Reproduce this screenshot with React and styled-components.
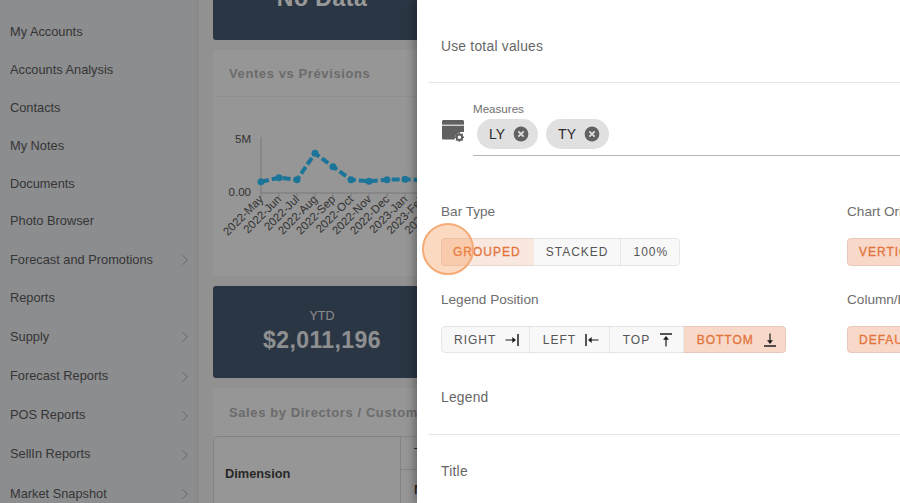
import React from "react";
import styled, { createGlobalStyle } from "styled-components";
import { ChevronRight } from "lucide-react";

const menu = [
  { label: "My Accounts" },
  { label: "Accounts Analysis" },
  { label: "Contacts" },
  { label: "My Notes" },
  { label: "Documents" },
  { label: "Photo Browser" },
  { label: "Forecast and Promotions", more: true },
  { label: "Reports" },
  { label: "Supply", more: true },
  { label: "Forecast Reports", more: true },
  { label: "POS Reports", more: true },
  { label: "SellIn Reports", more: true },
  { label: "Market Snapshot", more: true },
];

const months = [
  "2022-May", "2022-Jun", "2022-Jul", "2022-Aug", "2022-Sep", "2022-Oct",
  "2022-Nov", "2022-Dec", "2023-Jan", "2023-Feb", "2023-Mar",
];
const values = [85.7, 81.7, 83.7, 57.3, 70.7, 83.7, 85.3, 83.7, 83.3, 84, 84];

const App = () => (
  <>
    <GlobalStyle />
    <Page>
      <Sidebar>
        {menu.map(item => (
          <MenuItem key={item.label} $more={item.more}>
            {item.label}
            {item.more && <ChevronRight size={18} strokeWidth={1.2} />}
          </MenuItem>
        ))}
      </Sidebar>
      <Main>
        <StatCard $height={40}>
          <NoData>No Data</NoData>
        </StatCard>
        <Card $height={226}>
          <CardHeader>Ventes vs Prévisions</CardHeader>
          <Chart />
        </Card>
        <StatCard $height={92} $centered>
          <StatLabel>YTD</StatLabel>
          <StatValue>$2,011,196</StatValue>
        </StatCard>
        <Card>
          <CardHeader $plain>Sales by Directors / Customers</CardHeader>
          <Table>
            <DimensionCell>Dimension</DimensionCell>
            <TableCell>T</TableCell>
            <TableCell $last>N</TableCell>
          </Table>
        </Card>
      </Main>
      <Scrim />
      <Drawer>
        <ToggleRow>Use total values</ToggleRow>
        <Divider />
        <MeasuresRow>
          <WindowGearIcon />
          <MeasuresField>
            <FieldLabel>Measures</FieldLabel>
            <ChipRow>
              <Chip>LY<ChipClose /></Chip>
              <Chip>TY<ChipClose /></Chip>
            </ChipRow>
          </MeasuresField>
        </MeasuresRow>
        <OptionsGrid>
          <Option>
            <OptionLabel>Bar Type</OptionLabel>
            <ButtonGroup>
              <SegButton $state="fading">GROUPED</SegButton>
              <SegButton>STACKED</SegButton>
              <SegButton>100%</SegButton>
            </ButtonGroup>
          </Option>
          <Option>
            <OptionLabel>Chart Orientation</OptionLabel>
            <ButtonGroup>
              <SegButton $state="active">VERTICAL</SegButton>
              <SegButton>HORIZONTAL</SegButton>
            </ButtonGroup>
          </Option>
          <Option>
            <OptionLabel>Legend Position</OptionLabel>
            <ButtonGroup $short>
              <SegButton $icon>RIGHT<ArrowToIcon $turn={0} /></SegButton>
              <SegButton $icon>LEFT<ArrowToIcon $turn={180} /></SegButton>
              <SegButton $icon>TOP<ArrowToIcon $turn={270} /></SegButton>
              <SegButton $icon $state="active">BOTTOM<ArrowToIcon $turn={90} /></SegButton>
            </ButtonGroup>
          </Option>
          <Option>
            <OptionLabel>Column/Bar Width</OptionLabel>
            <ButtonGroup $short>
              <SegButton $state="active">DEFAULT</SegButton>
              <SegButton>CUSTOM</SegButton>
            </ButtonGroup>
          </Option>
        </OptionsGrid>
        <ToggleRow $legend>Legend</ToggleRow>
        <Divider />
        <ToggleRow $title>Title</ToggleRow>
      </Drawer>
      <ClickMarker />
    </Page>
  </>
);

const Chart = () => (
  <ChartSvg viewBox="0 0 204 180" width="204" height="180">
    <path d="M48 41V97H204" fill="none" stroke="#c9c9c9" />
    {months.map((m, i) => (
      <g key={m}>
        <path d={`M${48 + i * 18} 97v4`} stroke="#c9c9c9" />
        <AxisLabel transform={`translate(${51 + i * 18} 104) rotate(-45)`} textAnchor="end">
          {m}
        </AxisLabel>
      </g>
    ))}
    <AxisLabel x="38" y="47" textAnchor="end">5M</AxisLabel>
    <AxisLabel x="38" y="100" textAnchor="end">0.00</AxisLabel>
    <polyline
      points={values.map((v, i) => `${48 + i * 18},${v}`).join(" ")}
      fill="none"
      stroke="#30c4ff"
      strokeWidth="4"
      strokeDasharray="8 3"
    />
    {values.map((v, i) => (
      <circle key={months[i]} cx={48 + i * 18} cy={v} r="3.5" fill="#30c4ff" />
    ))}
  </ChartSvg>
);

const WindowGearIcon = () => (
  <IconSlot viewBox="0 0 24 24" width="24" height="24">
    <path
      d="M2.6 1H21.4C22.3 1 23 1.7 23 2.6V13H19.5L15 15.5 13.5 20.5H2.6C1.7 20.5 1 19.8 1 18.9V2.6C1 1.7 1.7 1 2.6 1Z"
      fill="#616161"
    />
    <path d="M1 6.2H23" stroke="#fff" strokeWidth="1" />
    <circle cx="18.4" cy="18.2" r="2.7" fill="none" stroke="#616161" strokeWidth="2" />
    <path
      d="M18.4 13.6v1.6M18.4 21.2v1.6M13.8 18.2h1.6M21.4 18.2h1.6M15.1 14.9l1.1 1.1M20.6 20.4l1.1 1.1M15.1 21.5l1.1-1.1M20.6 16l1.1-1.1"
      stroke="#616161"
      strokeWidth="1.6"
    />
  </IconSlot>
);

const ChipClose = () => (
  <ChipIcon viewBox="0 0 16 16" width="16" height="16">
    <circle cx="8" cy="8" r="7.4" fill="#616161" />
    <path d="M5.3 5.3l5.4 5.4M10.7 5.3l-5.4 5.4" stroke="#e0e0e0" strokeWidth="1.7" />
  </ChipIcon>
);

const ArrowToIcon = ({ $turn }) => (
  <ArrowSvg viewBox="0 0 14 14" width="14" height="14" $turn={$turn}>
    <path d="M0.5 7H10" stroke="#1c1c1c" strokeWidth="1.2" />
    <path d="M7.6 4.6L10.6 7 7.6 9.4Z" fill="#1c1c1c" stroke="#1c1c1c" strokeWidth="0.6" />
    <path d="M13 1V13" stroke="#1c1c1c" strokeWidth="1.5" />
  </ArrowSvg>
);

const GlobalStyle = createGlobalStyle`
  html, body {
    margin: 0;
    height: 100%;
    overflow: hidden;
    font-family: "Liberation Sans", Arial, sans-serif;
  }
`;

const Page = styled.div`
  position: relative;
  display: flex;
  width: 900px;
  height: 503px;
  overflow: hidden;
  background: #f2f2f2;
`;

const Sidebar = styled.nav`
  flex: 0 0 198px;
  box-sizing: border-box;
  padding-top: 13px;
  background: #e9ebee;
  border-right: 1px solid #dcdcdc;
`;

const MenuItem = styled.div`
  display: flex;
  align-items: center;
  justify-content: space-between;
  box-sizing: border-box;
  height: ${p => (p.$more ? "39.2px" : "37.8px")};
  padding: 0 3px 0 10px;
  font-size: 12.8px;
  color: #5a5a5a;
  white-space: nowrap;

  svg {
    color: #a5a5a5;
    margin-top: 2px;
  }
`;

const Main = styled.main`
  flex: 0 0 620px;
  display: flex;
  flex-direction: column;
  gap: 10px;
  padding-left: 15px;
`;

const StatCard = styled.div`
  box-sizing: border-box;
  flex: 0 0 auto;
  display: flex;
  flex-direction: column;
  align-items: center;
  justify-content: ${p => (p.$centered ? "center" : "flex-end")};
  width: 218px;
  height: ${p => p.$height}px;
  overflow: hidden;
  background: #475a70;
  border-radius: 0 0 3px 3px;
  color: #fff;
  ${p => p.$centered && "border-radius: 3px;"}
`;

const NoData = styled.div`
  font-size: 23px;
  font-weight: bold;
  letter-spacing: 0.5px;
  line-height: 28px;
  margin-bottom: 28px;
`;

const StatLabel = styled.div`
  font-size: 12.5px;
  line-height: 16px;
  opacity: 0.85;
`;

const StatValue = styled.div`
  font-size: 23px;
  font-weight: bold;
  line-height: 32px;
  letter-spacing: 0.4px;
  opacity: 0.9;
`;

const Card = styled.section`
  flex: ${p => (p.$height ? "0 0 auto" : "1 0 auto")};
  height: ${p => (p.$height ? `${p.$height}px` : "auto")};
  background: #fafafa;
  border-radius: 3px;
`;

const CardHeader = styled.h3`
  box-sizing: border-box;
  height: ${p => (p.$plain ? "48px" : "47px")};
  margin: 0;
  padding: ${p => (p.$plain ? "16.5px" : "15.5px")} 16px 0;
  font-size: 13px;
  line-height: 16px;
  letter-spacing: 0.6px;
  font-weight: bold;
  color: #b3b3b3;
  white-space: nowrap;
  border-bottom: ${p => (p.$plain ? "none" : "1px solid #f0f0f0")};
`;

const ChartSvg = styled.svg`
  display: block;
  margin-top: -1px;
`;

const AxisLabel = styled.text`
  font-size: 11.5px;
  fill: #555;
  font-family: "Liberation Sans", Arial, sans-serif;
`;

const Table = styled.div`
  display: grid;
  grid-template-columns: 187px 1fr;
  grid-template-rows: 33px 40px;
  box-sizing: border-box;
  border: 1px solid #dcdcdc;
  border-radius: 4px;
`;

const DimensionCell = styled.div`
  grid-row: 1 / 3;
  display: flex;
  align-items: center;
  padding-left: 11px;
  font-size: 12.8px;
  font-weight: bold;
  color: #444;
  border-right: 1px solid #dcdcdc;
`;

const TableCell = styled.div`
  padding: ${p => (p.$last ? "12px" : "8px")} 13px 0;
  font-size: 13px;
  font-weight: ${p => (p.$last ? "bold" : "normal")};
  color: #444;
  border-bottom: ${p => (p.$last ? "none" : "1px solid #dcdcdc")};
`;

const Scrim = styled.div`
  position: absolute;
  inset: 0;
  background: rgba(0, 0, 0, 0.4);
`;

const Drawer = styled.aside`
  position: absolute;
  top: 0;
  bottom: 0;
  left: 417px;
  width: 620px;
  box-sizing: border-box;
  padding-left: 12px;
  background: #fff;
  box-shadow: -3px 0 8px rgba(0, 0, 0, 0.3);
`;

const ToggleRow = styled.div`
  box-sizing: border-box;
  height: ${p => (p.$title ? "68px" : p.$legend ? "81px" : "82px")};
  padding: ${p => (p.$title ? "27.5px" : p.$legend ? "36px" : "37.5px")} 0 0 12px;
  font-size: 13.8px;
  letter-spacing: 0.25px;
  line-height: 17px;
  color: #666;
`;

const Divider = styled.hr`
  height: 1px;
  margin: 0;
  border: none;
  background: #e4e4e4;
`;

const MeasuresRow = styled.div`
  display: flex;
  align-items: flex-start;
  padding: 19px 0 0 12px;
`;

const IconSlot = styled.svg`
  flex: none;
  margin: 17px 8px 0 0;
`;

const MeasuresField = styled.div`
  flex: 1;
  border-bottom: 1px solid #b5b5b5;
`;

const FieldLabel = styled.div`
  font-size: 11.6px;
  line-height: 14px;
  color: #707070;
`;

const ChipRow = styled.div`
  display: flex;
  gap: 8px;
  padding: 3px 0 6px 4px;
`;

const Chip = styled.div`
  display: flex;
  align-items: center;
  justify-content: space-between;
  box-sizing: border-box;
  height: 30px;
  gap: 8px;
  padding: 0 9px 0 12px;
  border-radius: 15px;
  background: #e0e0e0;
  font-size: 14px;
  color: #2b2b2b;
`;

const ChipIcon = styled.svg`
  flex: none;
`;

const OptionsGrid = styled.div`
  display: grid;
  grid-template-columns: 406px 1fr;
  row-gap: 25px;
  padding: 47px 0 0 12px;
`;

const Option = styled.div`
  display: flex;
  flex-direction: column;
  gap: 18px;
`;

const OptionLabel = styled.div`
  font-size: 13.6px;
  line-height: 17px;
  color: #6d6d6d;
  white-space: nowrap;
`;

const ButtonGroup = styled.div`
  position: relative;
  display: inline-flex;
  align-self: flex-start;
  height: ${p => (p.$short ? "27px" : "28px")};
  border-radius: 4px;
  overflow: hidden;

  &::after {
    content: "";
    position: absolute;
    inset: 0;
    border: 1px solid rgba(0, 0, 0, 0.07);
    border-radius: 4px;
    pointer-events: none;
  }
`;

const SegButton = styled.div`
  display: flex;
  align-items: center;
  gap: 9px;
  padding: ${p => (p.$icon ? "0 9.5px 0 13px" : "0 12px")};
  font-size: 12px;
  letter-spacing: 1px;
  white-space: nowrap;
  color: ${p => (p.$state ? "#e4733a" : "#555")};
  -webkit-text-stroke: ${p => (p.$state ? "0.3px #e4733a" : "0")};
  background: ${p =>
    p.$state === "active" ? "#f8d9c9" : p.$state === "fading" ? "#f9e8df" : "#f8f8f8"};
  border-right: 1px solid ${p => (p.$state ? "transparent" : "#e6e6e6")};

  &:last-child {
    border-right: none;
  }
`;

const ArrowSvg = styled.svg`
  flex: none;
  transform: rotate(${p => p.$turn}deg);
`;

const ClickMarker = styled.div`
  position: absolute;
  left: 421.5px;
  top: 223px;
  width: 52px;
  height: 52px;
  border-radius: 50%;
  box-sizing: border-box;
  border: 2px solid #f4ab78;
  background: rgba(245, 150, 80, 0.35);
`;

export default App;
